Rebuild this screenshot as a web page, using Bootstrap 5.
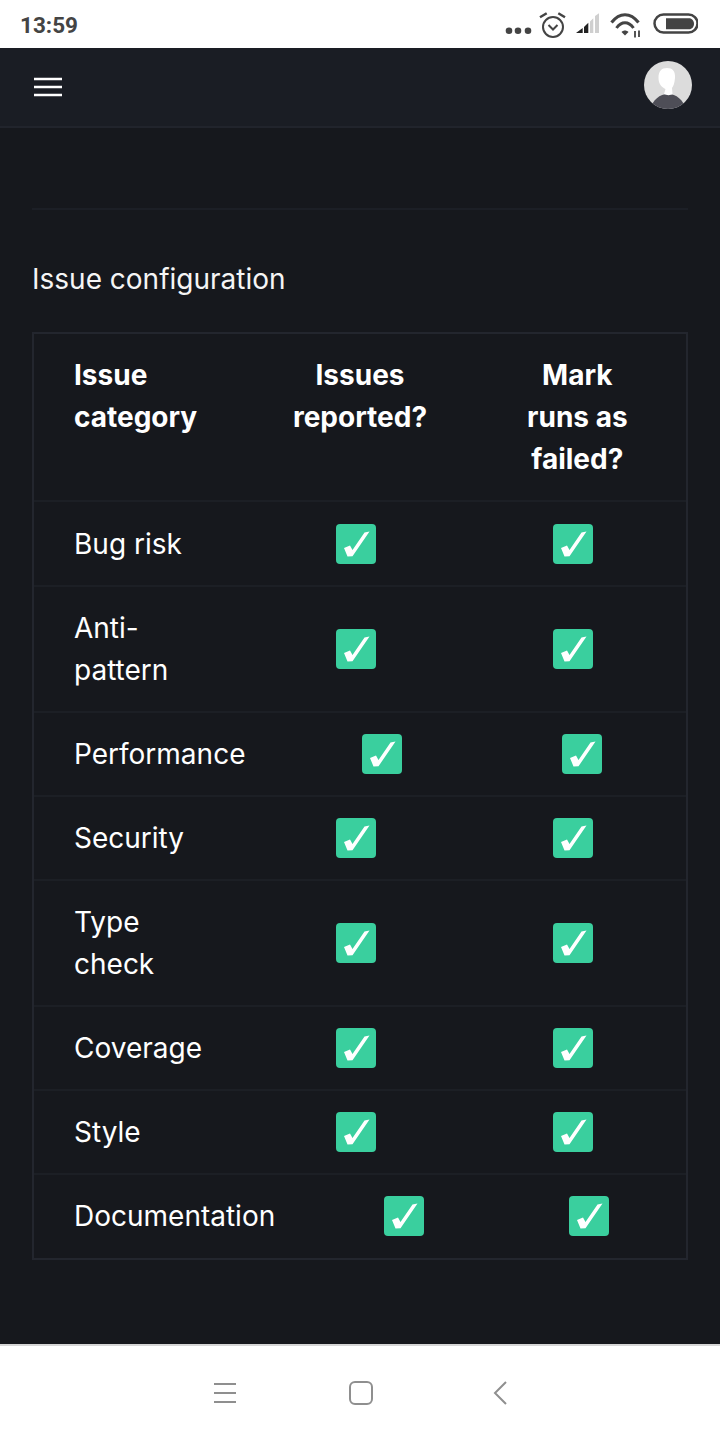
<!DOCTYPE html>
<html lang="en">
<head>
    <meta charset="UTF-8">
    <meta name="viewport" content="width=device-width, initial-scale=1.0">
    <title>Issue configuration</title>
    <link href="https://cdn.jsdelivr.net/npm/bootstrap@5.3.0/dist/css/bootstrap.min.css" rel="stylesheet">
    <style>
        body {
            height: 1440px;
            margin: 0;
            overflow: hidden;
            background-color: #16181d;
            color: #fff;
            font-family: Inter, "Liberation Sans", sans-serif;
        }
        .status-bar {
            height: 48px;
            padding: 0 22px 0 20px;
            background-color: #fff;
            color: #444;
        }
        .status-time {
            margin-top: 2px;
            font-family: Roboto, "Liberation Sans", sans-serif;
            font-size: 22.5px;
            font-weight: 700;
            line-height: 1;
        }
        .top-nav {
            height: 80px;
            padding: 0 28px 0 34px;
            background-color: #1a1d24;
            border-bottom: 2px solid #21242c;
        }
        .top-avatar {
            margin-bottom: 4px;
        }
        .page-main {
            padding: 0 32px;
        }
        .page-rule {
            height: 2px;
            margin: 80px 0 0;
            background-color: #1c1f26;
        }
        .section-title {
            margin: 48px 0 32px;
            font-size: 28px;
            font-weight: 400;
            line-height: 42px;
            color: #f5f5f5;
        }
        .issue-table {
            border: 2px solid #23262e;
        }
        .issue-row {
            border-bottom: 2px solid #1c1f25;
        }
        .issue-row:nth-child(2) {
            padding-top: 1px;
        }
        .issue-row:last-child {
            padding-bottom: 1px;
            border-bottom: 0;
        }
        .issue-cell {
            flex: 1 1 0;
            padding: 20px 40px;
            font-size: 28px;
            line-height: 42px;
        }
        .issue-head .issue-cell {
            font-weight: 700;
        }
        .issue-check {
            display: inline-block;
            width: 40px;
            height: 40px;
            margin-top: 1px;
            margin-right: 8px;
            vertical-align: top;
        }
        .bottom-bar {
            height: 96px;
            background-color: #fff;
            border-top: 2px solid #d6d6d6;
            gap: 113px;
        }
        .bottom-back {
            margin-left: 7px;
        }
    </style>
</head>
<body class="d-flex flex-column">
    <svg width="0" height="0" class="d-none">
        <symbol id="check-box" viewBox="0 0 40 40">
            <rect width="40" height="40" rx="4" fill="#3acf9e"/>
            <path d="M8 24L14 21.500L16.500 26L28.500 8.500L33.500 7.500L16.500 32.300L11.500 32.500Z" fill="#fff"/>
        </symbol>
    </svg>

    <div class="status-bar d-flex align-items-center justify-content-between flex-shrink-0">
        <span class="status-time">13:59</span>
        <svg width="196" height="36" viewBox="0 0 196 36">
            <circle cx="7" cy="24.7" r="3.3" fill="#444"/><circle cx="16" cy="24.7" r="3.3" fill="#444"/><circle cx="26" cy="24.7" r="3.3" fill="#444"/>
            <g fill="none" stroke="#444" stroke-width="2">
                <circle cx="51" cy="21" r="10"/>
                <path d="M46.5 19l4.5 4.5 4.5-4.5"/>
                <path d="M38 11.3l6.7-4M56.3 7.3l6.7 4" stroke-width="2.5"/>
            </g>
            <path d="M74 27l6.7-5v5z" fill="#222"/><path d="M82 21l4.3-4.3V27H82z" fill="#222"/>
            <path d="M88 15.5l3.3-3.2V27H88zM93 10l4-2.7V27h-4z" fill="#cfcfcf"/>
            <g fill="none" stroke="#444" stroke-width="3">
                <path d="M109.500 16.500c8-10.500 19-10.500 27 0"/><path d="M114.500 22c5-7 12-7 17 0"/>
            </g>
            <path d="M119.500 26c2-2 5-2 7 0l-3.500 3.500z" fill="#444"/>
            <path d="M133 25v6.500M137 24.500v6.500" stroke="#444" stroke-width="1.800"/>
            <rect x="152.500" y="8.500" width="43" height="18" rx="9" fill="none" stroke="#444" stroke-width="2.500"/>
            <path d="M164 12.300h23c3 0 5 2.500 5 5.500s-2 5.500-5 5.500h-23z" fill="#444"/>
        </svg>
    </div>

    <nav class="top-nav d-flex align-items-center justify-content-between flex-shrink-0">
        <svg width="28" height="20" viewBox="0 0 28 20"><path d="M0 2h28M0 10h28M0 18h28" stroke="#fff" stroke-width="2.6"/></svg>
        <svg class="top-avatar" width="48" height="48" viewBox="0 0 48 48">
            <defs><clipPath id="avatar-clip"><circle cx="24" cy="24" r="24"/></clipPath></defs>
            <g clip-path="url(#avatar-clip)">
                <rect width="48" height="48" fill="#dcdcdc"/>
                <path d="M7 48c1-9 9-15 17-15 8 0 16 6 17 15z" fill="#4e4e57"/>
                <path d="M14.500 17c0-7 3-10 8.500-10s8.500 3 8 10c-.5 5-1.500 8-3 10l.5 6c-2 1.500-6 1.500-8.500 0l1.500-5c-4-2-7-5-7-11z" fill="#fff"/>
            </g>
        </svg>
    </nav>

    <main class="page-main flex-grow-1">
        <hr class="page-rule border-0 opacity-100">
        <h2 class="section-title">Issue configuration</h2>
        <div class="issue-table">
            <div class="issue-row issue-head d-flex text-center">
                <div class="issue-cell text-start">Issue category</div>
                <div class="issue-cell">Issues reported?</div>
                <div class="issue-cell">Mark runs as failed?</div>
            </div>
            <div class="issue-row d-flex align-items-center">
                <div class="issue-cell">Bug risk</div>
                <div class="issue-cell text-center"><svg class="issue-check"><use href="#check-box"/></svg></div>
                <div class="issue-cell text-center"><svg class="issue-check"><use href="#check-box"/></svg></div>
            </div>
            <div class="issue-row d-flex align-items-center">
                <div class="issue-cell">Anti-pattern</div>
                <div class="issue-cell text-center"><svg class="issue-check"><use href="#check-box"/></svg></div>
                <div class="issue-cell text-center"><svg class="issue-check"><use href="#check-box"/></svg></div>
            </div>
            <div class="issue-row d-flex align-items-center">
                <div class="issue-cell">Performance</div>
                <div class="issue-cell text-center"><svg class="issue-check"><use href="#check-box"/></svg></div>
                <div class="issue-cell text-center"><svg class="issue-check"><use href="#check-box"/></svg></div>
            </div>
            <div class="issue-row d-flex align-items-center">
                <div class="issue-cell">Security</div>
                <div class="issue-cell text-center"><svg class="issue-check"><use href="#check-box"/></svg></div>
                <div class="issue-cell text-center"><svg class="issue-check"><use href="#check-box"/></svg></div>
            </div>
            <div class="issue-row d-flex align-items-center">
                <div class="issue-cell">Type check</div>
                <div class="issue-cell text-center"><svg class="issue-check"><use href="#check-box"/></svg></div>
                <div class="issue-cell text-center"><svg class="issue-check"><use href="#check-box"/></svg></div>
            </div>
            <div class="issue-row d-flex align-items-center">
                <div class="issue-cell">Coverage</div>
                <div class="issue-cell text-center"><svg class="issue-check"><use href="#check-box"/></svg></div>
                <div class="issue-cell text-center"><svg class="issue-check"><use href="#check-box"/></svg></div>
            </div>
            <div class="issue-row d-flex align-items-center">
                <div class="issue-cell">Style</div>
                <div class="issue-cell text-center"><svg class="issue-check"><use href="#check-box"/></svg></div>
                <div class="issue-cell text-center"><svg class="issue-check"><use href="#check-box"/></svg></div>
            </div>
            <div class="issue-row d-flex align-items-center">
                <div class="issue-cell">Documentation</div>
                <div class="issue-cell text-center"><svg class="issue-check"><use href="#check-box"/></svg></div>
                <div class="issue-cell text-center"><svg class="issue-check"><use href="#check-box"/></svg></div>
            </div>
        </div>
    </main>

    <div class="bottom-bar d-flex align-items-center justify-content-center flex-shrink-0">
        <svg width="22" height="22" viewBox="0 0 22 22"><path d="M0 2h22M0 11h22M0 20h22" fill="none" stroke="#8f8f8f" stroke-width="2"/></svg>
        <svg width="24" height="24" viewBox="0 0 24 24"><rect x="1" y="1" width="22" height="22" rx="5" fill="none" stroke="#8f8f8f" stroke-width="2"/></svg>
        <svg class="bottom-back" width="14" height="24" viewBox="0 0 14 24"><path d="M13 1L2 12l11 11" fill="none" stroke="#8f8f8f" stroke-width="2"/></svg>
    </div>

    <script src="https://cdn.jsdelivr.net/npm/bootstrap@5.3.0/dist/js/bootstrap.bundle.min.js"></script>
</body>
</html>
